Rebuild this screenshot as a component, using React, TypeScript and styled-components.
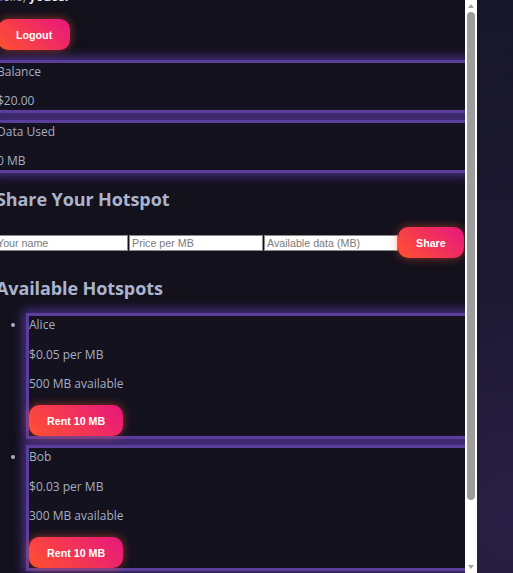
import styled, { createGlobalStyle } from 'styled-components';

const GlobalStyle = createGlobalStyle`
  html, body {
    margin: 0;
    height: 100%;
    overflow: hidden;
    background: #181629;
  }
`;

const hotspots = [
  { name: 'Alice', price: '0.05', data: 500 },
  { name: 'Bob', price: '0.03', data: 300 },
];

export default function App() {
  return (
    <>
      <GlobalStyle />
      <Page>
        <Panel>
          <Viewport>
            <Content>
              <Greeting>
                Hello, <b>youcef</b>
              </Greeting>
              <Button $offset={4}>Logout</Button>

              <Card>
                <Line>Balance</Line>
                <Value>$20.00</Value>
              </Card>
              <Card>
                <Line>Data Used</Line>
                <Value>0 MB</Value>
              </Card>

              <Heading $top={13}>Share Your Hotspot</Heading>
              <Form>
                <Input placeholder="Your name" />
                <Input placeholder="Price per MB" />
                <Input placeholder="Available data (MB)" />
                <Button>Share</Button>
              </Form>

              <Heading $top={17}>Available Hotspots</Heading>
              <List>
                {hotspots.map((h) => (
                  <Item key={h.name}>
                    <HotspotCard>
                      <Line>{h.name}</Line>
                      <Line>${h.price} per MB</Line>
                      <Line>{h.data} MB available</Line>
                      <div>
                        <Button>Rent 10 MB</Button>
                      </div>
                    </HotspotCard>
                  </Item>
                ))}
              </List>
            </Content>
          </Viewport>
          <Scrollbar>
            <Arrow $dir="up" />
            <Thumb />
            <Arrow $dir="down" />
          </Scrollbar>
        </Panel>
        <Aside />
      </Page>
    </>
  );
}

const Page = styled.div`
  display: flex;
  height: 573px;
  font-family: 'Open Sans', 'Noto Sans', sans-serif;
`;

const Panel = styled.div`
  display: flex;
  width: 477px;
  height: 100%;
  flex-shrink: 0;
  background: #12111c;
`;

const Viewport = styled.div`
  flex: 1;
  min-width: 0;
  overflow: hidden;
`;

const Scrollbar = styled.div`
  width: 12px;
  flex-shrink: 0;
  display: flex;
  flex-direction: column;
  align-items: center;
  justify-content: space-between;
  background: #ffffff;
`;

const Arrow = styled.div<{ $dir: 'up' | 'down' }>`
  width: 0;
  height: 0;
  margin: 4px 0;
  border-left: 3px solid transparent;
  border-right: 3px solid transparent;
  ${(p) =>
    p.$dir === 'up'
      ? 'border-bottom: 4px solid #a3a3a3;'
      : 'border-top: 4px solid #a3a3a3;'}
`;

const Thumb = styled.div`
  width: 8px;
  height: 488px;
  margin-bottom: auto;
  border-radius: 4px;
  background: #9d9d9d;
`;

const Content = styled.div`
  margin: -12px -6px 0 -6px;
  color: #a6aec3;
  font-size: 12px;
`;

const Aside = styled.div`
  flex: 1;
  background: radial-gradient(circle at 120% 90%, #2a2046 0%, #1c1931 45%, #181629 100%);
`;

const Greeting = styled.p`
  margin: 0;
  line-height: 18px;
  b {
    color: #e6e8f0;
  }
`;

const Button = styled.button<{ $offset?: number }>`
  height: 31px;
  padding: 0 18px;
  margin-left: ${(p) => p.$offset ?? 0}px;
  border: none;
  border-radius: 10px;
  background: linear-gradient(45deg, #ff512f, #e6177e);
  box-shadow: 0 0 10px rgba(255, 81, 47, 0.55);
  color: #ffffff;
  font-family: 'Liberation Sans', Arial, sans-serif;
  font-weight: bold;
  font-size: 10.7px;
  cursor: pointer;
  flex-shrink: 0;

  ${Greeting} + & {
    margin-top: 13px;
    margin-bottom: 10px;
  }
`;

const Card = styled.div`
  background: #13121e;
  border: 3px solid #5b3e9c;
  box-shadow: 0 0 10px 3px rgba(92, 60, 168, 0.75);
  margin-bottom: 7px;
`;

const Line = styled.div`
  line-height: 18px;
`;

const Value = styled(Line)`
  margin-top: 11px;
`;

const Heading = styled.h2<{ $top: number }>`
  margin: ${(p) => p.$top}px 0 0 2px;
  font-size: 18px;
  line-height: 26px;
  letter-spacing: -0.1px;
  font-weight: 700;
  color: #aab4cd;
`;

const Form = styled.div`
  display: flex;
  align-items: center;
  gap: 1px;
  margin-top: 15px;

  button {
    margin-left: -1px;
  }
`;

const Input = styled.input`
  box-sizing: border-box;
  width: 134px;
  height: 16px;
  padding: 0 2px;
  border: 1px solid #8a8a8a;
  background: #ffffff;
  font-family: 'Liberation Sans', Arial, sans-serif;
  font-size: 10.7px;
  outline: none;

  &::placeholder {
    color: #7a7a7a;
  }
`;

const List = styled.ul`
  margin: 12px 0 0;
  padding-left: 32px;
  list-style: disc;
`;

const Item = styled.li`
  margin-bottom: 6px;
  &::marker {
    color: #a6aec3;
  }
`;

const HotspotCard = styled(Card)`
  display: flex;
  flex-direction: column;
  gap: 11.7px;
  margin-bottom: 0;
`;
